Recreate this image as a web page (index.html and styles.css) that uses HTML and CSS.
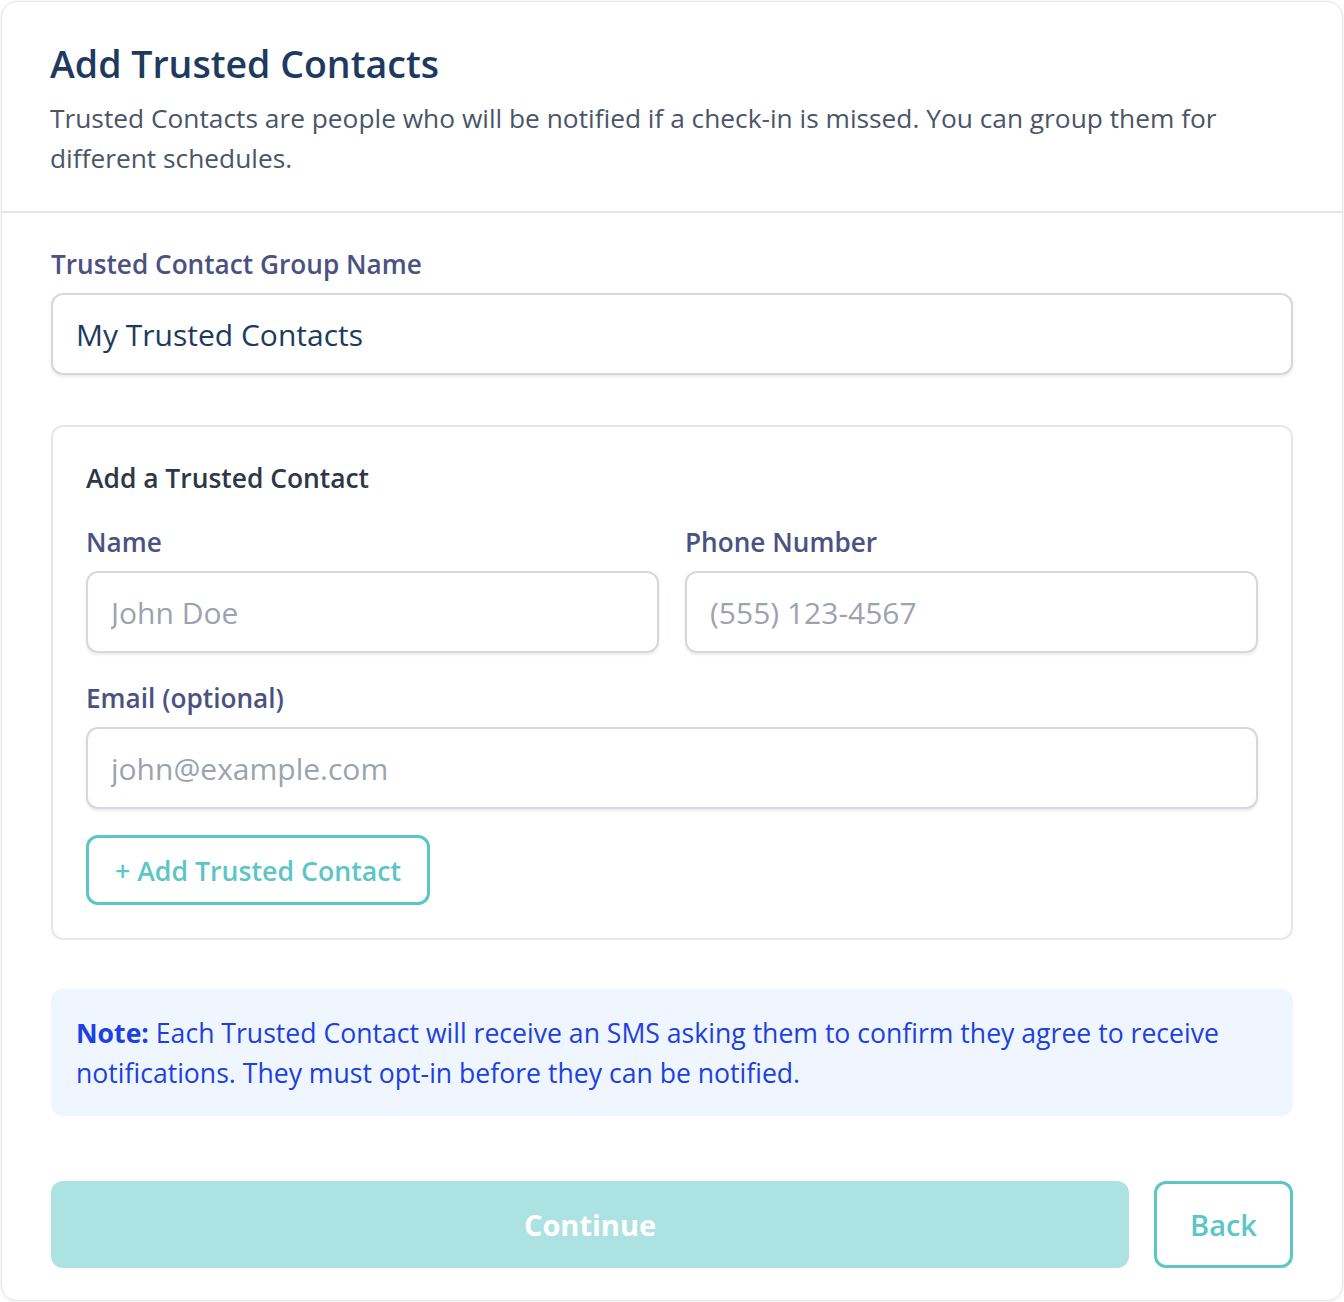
FILE: index.html
```html
<!DOCTYPE html>
<html lang="en">
<head>
  <meta charset="UTF-8" />
  <meta name="viewport" content="width=device-width, initial-scale=1.0" />
  <title>Add Trusted Contacts</title>
  <link rel="stylesheet" href="styles.css">
</head>
<body>
  <div class="card">
    <header class="card-header">
      <h1>Add Trusted Contacts</h1>
      <p>Trusted Contacts are people who will be notified if a check-in is missed. You can group them for different schedules.</p>
    </header>

    <div class="card-body">
      <div class="field">
        <label for="groupName">Trusted Contact Group Name</label>
        <input id="groupName" type="text" value="My Trusted Contacts" />
      </div>

      <section class="contact-box">
        <h2>Add a Trusted Contact</h2>

        <div class="row">
          <div class="field">
            <label for="contactName">Name</label>
            <input id="contactName" type="text" placeholder="John Doe" />
          </div>
          <div class="field">
            <label for="contactPhone">Phone Number</label>
            <input id="contactPhone" type="tel" placeholder="(555) 123-4567" />
          </div>
        </div>

        <div class="field field-email">
          <label for="contactEmail">Email (optional)</label>
          <input id="contactEmail" type="email" placeholder="john@example.com" />
        </div>

        <button class="btn-outline btn-add" type="button">+ Add Trusted Contact</button>
      </section>

      <div class="note">
        <strong>Note:</strong> Each Trusted Contact will receive an SMS asking them to confirm they agree to receive notifications. They must opt-in before they can be notified.
      </div>

      <div class="actions">
        <button class="btn-continue" type="button" disabled>Continue</button>
        <button class="btn-outline btn-back" type="button">Back</button>
      </div>
    </div>
  </div>
</body>
</html>
```

FILE: styles.css
```css
:root {
  --navy: #1e3a5f;
  --label: #4b5282;
  --teal: #5cc6c5;
  --border: #e5e7eb;
}

* {
  box-sizing: border-box;
}

body {
  margin: 0;
  padding: 1px;
  font-family: "Open Sans", "Noto Sans", sans-serif;
  background: #ffffff;
  color: var(--navy);
}

.card {
  width: 1342px;
  height: 1300px;
  border: 1px solid var(--border);
  border-radius: 16px;
  box-shadow: 0 1px 4px rgba(0, 0, 0, 0.08);
  background: #ffffff;
}

/* CABECALHO */
.card-header {
  padding: 38px 48px 33px;
  border-bottom: 2px solid var(--border);
}

.card-header h1 {
  margin: 0;
  font-size: 37.5px;
  line-height: 48px;
  font-weight: 600;
  color: var(--navy);
}

.card-header p {
  margin: 10px 0 0;
  font-size: 26.3px;
  line-height: 40px;
  color: #4a5568;
}

.card-body {
  padding: 38px 49px 32px;
}

/* CAMPOS */
.field {
  display: flex;
  flex-direction: column;
  gap: 16px;
}

.field label {
  font-size: 26.2px;
  line-height: 26px;
  font-weight: 600;
  color: var(--label);
}

.field input {
  height: 82px;
  padding: 0 23px;
  border: 2px solid #d4d8df;
  border-radius: 12px;
  box-shadow: 0 2px 3px rgba(0, 0, 0, 0.08);
  font-family: inherit;
  font-size: 30px;
  color: var(--navy);
  outline: none;
}

.field input::placeholder {
  color: #9ca3af;
}

.contact-box {
  margin-top: 50px;
  padding: 32px 33px 33px;
  border: 2px solid var(--border);
  border-radius: 12px;
  display: flex;
  flex-direction: column;
}

.contact-box h2 {
  margin: 0;
  font-size: 26.4px;
  line-height: 38px;
  font-weight: 600;
  color: #2d3748;
}

.row {
  display: grid;
  grid-template-columns: 1fr 1fr;
  gap: 26px;
  margin-top: 32px;
}

.field-email {
  margin-top: 32px;
}

/* BOTOES */
button {
  font-family: inherit;
  cursor: pointer;
}

.btn-outline {
  background: #ffffff;
  border: 3px solid var(--teal);
  border-radius: 12px;
  color: var(--teal);
  font-weight: 600;
}

.btn-add {
  align-self: flex-start;
  height: 70px;
  margin-top: 26px;
  padding: 0 26px;
  font-size: 26.7px;
}

.note {
  margin-top: 49px;
  padding: 24px 25px 23px;
  background: #eff6ff;
  border-radius: 12px;
  font-size: 26.6px;
  line-height: 40px;
  color: #1d40e0;
}

.note strong {
  font-weight: 700;
}

.actions {
  margin-top: 65px;
  display: flex;
  gap: 25px;
}

.btn-continue {
  flex: 1;
  height: 87px;
  border: none;
  border-radius: 12px;
  background: #ace2e1;
  color: #ffffff;
  font-size: 29px;
  font-weight: 700;
}

.btn-back {
  width: 139px;
  height: 87px;
  font-size: 29px;
}
```
